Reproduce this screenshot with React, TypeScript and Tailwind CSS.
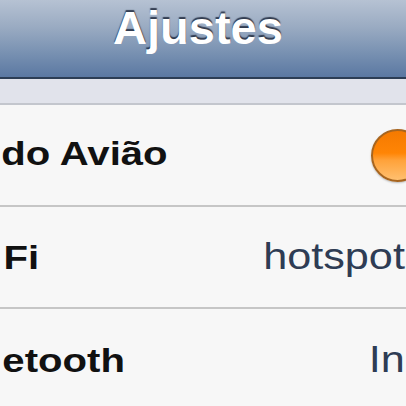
import React from "react";

export default function App() {
  const font = { fontFamily: '"Liberation Sans", Arial, Helvetica, sans-serif' };
  return (
    <div className="w-[406px] h-[406px] overflow-hidden bg-[#f7f7f7] flex flex-col" style={font}>
      <div className="h-[79px] shrink-0 border-b-2 border-[#2c3d55] bg-[linear-gradient(180deg,#b6c2d3_0%,#9aabc2_35%,#7790b1_70%,#5b78a2_100%)] flex justify-center">
        <div
          className="pt-[4px] pr-[10px] text-[47px] leading-none font-bold text-white [text-shadow:0_-2px_1px_rgba(30,40,60,0.85)]"
        >
          Ajustes
        </div>
      </div>
      <div className="h-[26px] shrink-0 bg-[#e1e3eb] border-b-2 border-[#c3c6cd]" />
      <div className="h-[102px] shrink-0 border-b-2 border-[#c6c6c6] flex items-center relative overflow-hidden">
        <span className="pl-[1px] -mt-[4px] text-[34px] leading-none font-bold text-[#111] scale-x-[1.18] origin-left">
          do Avião
        </span>
        <div className="absolute left-[371px] top-[24px] w-[53px] h-[53px] rounded-full border-2 border-[#a7651f] bg-[linear-gradient(180deg,#f57a00_0%,#ff8505_45%,#ffa23a_60%,#ffc070_100%)] shadow-[0_1px_2px_rgba(0,0,0,0.25)]" />
      </div>
      <div className="h-[102px] shrink-0 border-b-2 border-[#c6c6c6] flex items-center justify-between overflow-hidden">
        <span className="pl-[3px] text-[34px] leading-none font-bold text-[#111] scale-x-[1.18] origin-left">
          Fi
        </span>
        <span className="pr-[1px] text-[36px] leading-none text-[#2e3c54] scale-x-[1.2] origin-right">
          hotspot
        </span>
      </div>
      <div className="h-[102px] shrink-0 flex items-center justify-between overflow-hidden">
        <span className="pl-[2px] text-[34px] leading-none font-bold text-[#111] scale-x-[1.18] origin-left">
          etooth
        </span>
        <span className="pr-[1px] text-[36px] leading-none text-[#2e3c54] scale-x-[1.2] origin-right">
          In
        </span>
      </div>
    </div>
  );
}
